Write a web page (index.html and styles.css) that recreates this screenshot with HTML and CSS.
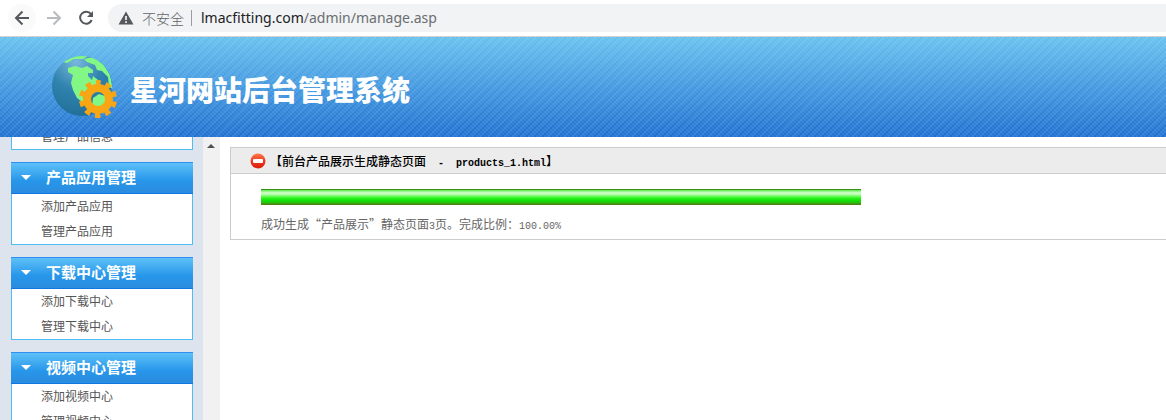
FILE: index.html
```html
<!DOCTYPE html>
<html lang="zh-CN">
<head>
    <meta charset="UTF-8">
    <meta name="viewport" content="width=device-width, initial-scale=1.0">
    <title>星河网站后台管理系统</title>
    <link rel="stylesheet" href="styles.css">
</head>
<body>
    <!-- Browser toolbar -->
    <div class="toolbar">
        <button type="button" class="nav-btn back" aria-label="后退">
            <svg width="16" height="16" viewBox="0 0 16 16" fill="none" stroke="#55585c" stroke-width="2"><path d="M15 8H2.5M8.5 1.5 2 8l6.500 6.500"/></svg>
        </button>
        <button type="button" class="nav-btn" aria-label="前进">
            <svg width="16" height="16" viewBox="0 0 16 16" fill="none" stroke="#b9bbbe" stroke-width="2"><path d="M1 8h12.500M7.500 1.500 14 8l-6.500 6.500"/></svg>
        </button>
        <button type="button" class="nav-btn" aria-label="刷新">
            <svg width="16" height="16" viewBox="0 0 16 16" fill="none" stroke="#55585c" stroke-width="2"><path d="M13 4.200A6 6 0 1 0 13.700 10"/><path d="M15 1v6H9z" fill="#55585c" stroke="none"/></svg>
        </button>
        <div class="address">
            <svg class="warn" width="16" height="14" viewBox="0 0 16 14"><path d="M8 0.500 15.500 13.500H0.500z" fill="#55585c"/><path d="M8 5v4M8 10.200v1.800" stroke="#fff" stroke-width="1.600"/></svg>
            <span class="insecure">不安全</span>
            <div class="url" role="textbox" contenteditable="true" spellcheck="false" aria-label="地址">lmacfitting.com<span class="path">/admin/manage.asp</span></div>
        </div>
    </div>

    <header class="banner">
        <svg class="logo" width="70" height="68" viewBox="0 0 70 68" aria-hidden="true">
            <defs>
                <radialGradient id="sea" cx="0.400" cy="0.100" r="0.900">
                    <stop offset="0" stop-color="#79b7dd"/>
                    <stop offset="0.500" stop-color="#2f83ae"/>
                    <stop offset="1" stop-color="#22709a"/>
                </radialGradient>
                <clipPath id="globe"><circle cx="32" cy="33" r="30"/></clipPath>
            </defs>
            <circle cx="32" cy="33" r="30" fill="url(#sea)"/>
            <g clip-path="url(#globe)" fill="#83f786">
                <path d="M13 9 19 4 30 2 38 3 33 6 24 6 17 10z"/>
                <path d="M34 6 44 4 54 12 60 22 63 36 59 34 58 24 52 18 47 17 45 12 37 9z"/>
                <path d="M18 15 25 13 32 15 37 13 43 17 43 20 38 20 38 23 42 27 43 23 48 27 48 31 42 33 39 38 34 40 33 44 38 49 36 52 27 45 23 37 21 30 23 22 18 19z"/>
                <path d="M43 45 49 41 55 43 58 47 52 55 42 54z"/>
            </g>
            <!-- gear: ring plus ten dashed teeth -->
            <g fill="none" stroke="#f8a614" transform="rotate(-90 48 46)">
                <circle cx="48" cy="46" r="11" stroke-width="8"/>
                <circle cx="48" cy="46" r="16" stroke-width="6" stroke-dasharray="5.200 4.853" stroke-dashoffset="2.600"/>
            </g>
        </svg>
        <h1>星河网站后台管理系统</h1>
    </header>

    <div class="content">
        <nav class="sidebar">
            <div class="menu">
                <section class="group">
                    <ul>
                        <li><a href="#">管理产品信息</a></li>
                    </ul>
                </section>
                <section class="group">
                    <h2>产品应用管理</h2>
                    <ul>
                        <li><a href="#">添加产品应用</a></li>
                        <li><a href="#">管理产品应用</a></li>
                    </ul>
                </section>
                <section class="group">
                    <h2>下载中心管理</h2>
                    <ul>
                        <li><a href="#">添加下载中心</a></li>
                        <li><a href="#">管理下载中心</a></li>
                    </ul>
                </section>
                <section class="group">
                    <h2>视频中心管理</h2>
                    <ul>
                        <li><a href="#">添加视频中心</a></li>
                        <li><a href="#">管理视频中心</a></li>
                    </ul>
                </section>
            </div>
        </nav>
        <div class="scrollbar"><span class="arrow-up"></span></div>

        <main>
            <section class="panel">
                <div class="panel-head">
                    <svg width="16" height="16" viewBox="0 0 16 16" aria-hidden="true">
                        <defs>
                            <linearGradient id="stop" x1="0" y1="0" x2="0" y2="1">
                                <stop offset="0" stop-color="#ff7a4d"/>
                                <stop offset="0.500" stop-color="#ee3a1c"/>
                                <stop offset="1" stop-color="#d81f0c"/>
                            </linearGradient>
                        </defs>
                        <circle cx="8" cy="8" r="7.500" fill="url(#stop)"/>
                        <rect x="3" y="6" width="10" height="4" rx="1" fill="#fff"/>
                    </svg>
                    <h3>【前台产品展示生成静态页面<span class="mono">&nbsp;&nbsp;-&nbsp;&nbsp;products_1.html</span>】</h3>
                </div>
                <div class="panel-body">
                    <div class="bar" role="progressbar" aria-label="完成比例" aria-valuenow="100" aria-valuemin="0" aria-valuemax="100"></div>
                    <p>成功生成“产品展示”静态页面<span class="mono">3</span>页。完成比例：<span class="mono">100.00%</span></p>
                </div>
            </section>
        </main>
    </div>
</body>
</html>
```
FILE: styles.css
```css
* {
    box-sizing: border-box;
}

body {
    margin: 0;
    height: 100vh;
    display: flex;
    flex-direction: column;
    overflow: hidden;
    background-color: #fff;
    color: #555;
    font-family: "Noto Sans CJK SC", sans-serif;
    font-size: 12px;
}

h1, h2, h3, p, ul {
    margin: 0;
    padding: 0;
}

/* Browser toolbar */
.toolbar {
    flex: none;
    display: flex;
    align-items: center;
    height: 37px;
    padding-left: 8px;
    border-bottom: 1px solid #d0d0d0;
}

.nav-btn {
    display: flex;
    align-items: center;
    justify-content: center;
    width: 28px;
    height: 28px;
    margin-right: 4px;
    padding: 0;
    border: 0;
    border-radius: 50%;
    background: none;
}

.back {
    background-color: #fafafa;
}

.address {
    flex: 1;
    display: flex;
    align-items: center;
    height: 28px;
    margin-left: 4px;
    padding-left: 10px;
    border-radius: 14px 0 0 14px;
    background-color: #f1f3f4;
    font-size: 14px;
    line-height: 20px;
}

.warn {
    margin-right: 8px;
}

.insecure {
    color: #5f6368;
    font-weight: 300;
}

.url {
    margin-left: 7px;
    padding-left: 9px;
    color: #202124;
    font-family: "Noto Sans", sans-serif;
    border-left: 1px solid #9a9da0;
    line-height: 16px;
    outline: none;
    white-space: nowrap;
}

.path {
    color: #6b6e72;
}

/* Banner */
.banner {
    flex: none;
    display: flex;
    align-items: center;
    height: 100px;
    padding-left: 50px;
    background:
        repeating-conic-gradient(rgba(255, 255, 255, 0.08) 0 25%, transparent 0 50%) 0 0 / 4px 4px,
        repeating-linear-gradient(135deg, rgba(255, 255, 255, 0.06) 0 3px, transparent 3px 6px),
        linear-gradient(#66c0ef, #1c6fd0);
}

.logo {
    margin-right: 10px;
}

h1 {
    padding-top: 4px;
    color: #fff;
    font-size: 28px;
    font-weight: 900;
    line-height: 40px;
}

/* Sidebar */
.content {
    flex: 1;
    display: flex;
    min-height: 0;
}

.sidebar {
    flex: none;
    width: 203px;
    padding: 0 10px 0 11px;
    background-color: #dde4ee;
    overflow: hidden;
}

/* list is scrolled part of the way down */
.menu {
    margin-top: -13px;
}

.group {
    margin-bottom: 12px;
}

.group h2 {
    display: flex;
    align-items: center;
    height: 32px;
    padding-left: 10px;
    border-top: 1px solid #2e8fee;
    border-bottom: 1px solid #0d78e4;
    background: linear-gradient(#5dc0f7, #2796ea 60%, #2b8cde);
    color: #fff;
    font-size: 15px;
    font-weight: 700;
    line-height: 20px;
    padding-bottom: 2px;
}

.group h2::before {
    content: "";
    margin-right: 15px;
    border: 5px solid transparent;
    border-top-color: #fff;
    border-bottom: 0;
}

.group ul {
    list-style: none;
    border: 1px solid #4fbcf2;
    border-top: 0;
    background-color: #fff;
}

.group a {
    display: block;
    padding: 0 0 2px 29px;
    color: #555;
    line-height: 23px;
    text-decoration: none;
}

.scrollbar {
    flex: none;
    width: 17px;
    padding: 7px 4px;
    background-color: #f1f1f1;
}

.arrow-up {
    display: block;
    width: 8px;
    border: 4px solid transparent;
    border-top: 0;
    border-bottom-color: #505050;
}

/* Result panel */
main {
    flex: 1;
    min-width: 0;
    padding: 10px 0 0 10px;
}

.panel {
    border: 1px solid #ccc;
    border-right: 0;
}

.panel-head {
    display: flex;
    align-items: center;
    height: 26px;
    padding-left: 19px;
    border-bottom: 1px solid #ccc;
    background-color: #ececec;
}

.panel-head svg {
    margin-right: 4px;
}

h3 {
    color: #000;
    font-size: 12px;
    font-weight: 500;
    line-height: 16px;
}

.mono {
    font-family: "Liberation Mono", monospace;
    font-size: 10px;
    line-height: 10px;
}

h3 .mono {
    font-weight: 700;
}

.panel-body {
    padding: 15px 30px 5px;
}

.bar {
    max-width: 600px;
    height: 16px;
    margin-bottom: 9px;
    background: linear-gradient(#2f9416 0 1px, #5fe84a 1px, #d8ffd2 4px, #9dff92 6px, #2df41c 9px, #0fdc06 12px, #2fb80c 14px, #4b8410 15px);
}

.panel-body p {
    color: #666;
    line-height: 20px;
}
```
